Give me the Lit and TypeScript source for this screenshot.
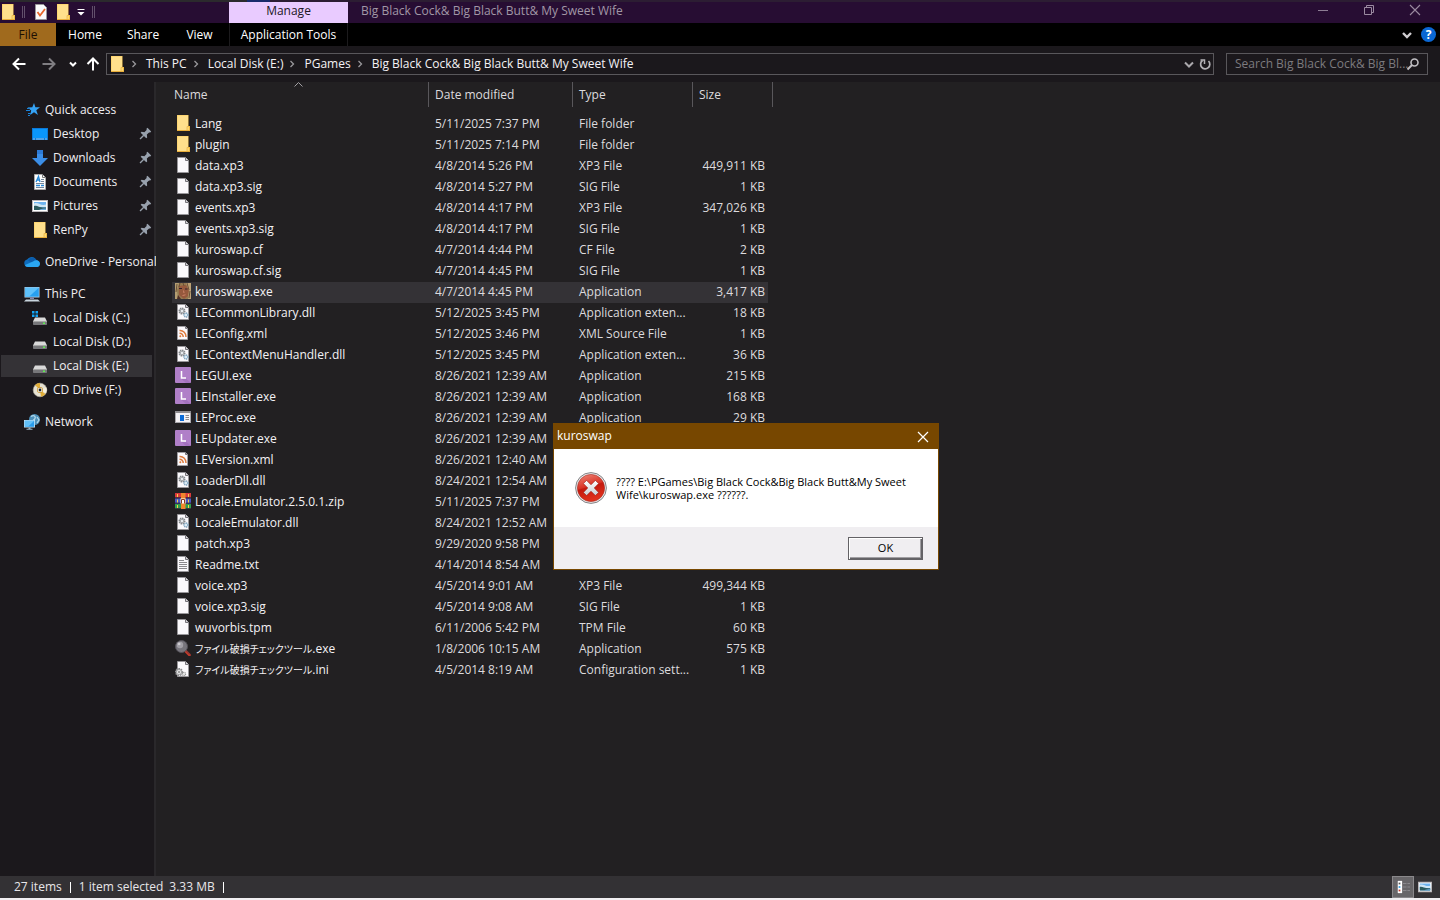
import { LitElement, html, css, svg, TemplateResult } from "lit";
import { customElement } from "lit/decorators.js";
import { classMap } from "lit/directives/class-map.js";

const page = svg`<path d="M2.500 .5h8l3 3v12h-11z" fill="#fbf9fc" stroke="#98969a"/><path d="M10.500 .5v3h3" fill="#d8d6da" stroke="#77757a"/>`;
const drive = svg`<path d="M3 7.500h10l2 4H1z" fill="#d9d9d9"/><rect x="1" y="11" width="14" height="4" rx=".8" fill="#77777a"/><rect x="1" y="11" width="14" height="1" fill="#a5a5a5"/><rect x="11" y="12.500" width="2" height="1.500" fill="#5ff04f"/>`;
const gears = svg`<circle cx="7" cy="7" r="2.600" fill="none" stroke="#85898d" stroke-width="1.800" stroke-dasharray="1.400 .6"/><circle cx="7" cy="7" r="1.800" fill="#e8ebee" stroke="#777b80" stroke-width=".6"/><circle cx="11" cy="11" r="2" fill="#dcebf5" stroke="#7fa3bd" stroke-width="1.400" stroke-dasharray="1.200 .5"/>`;

const icons: Record<string, TemplateResult> = {
  folder: svg`<path d="M2 0h11.500v11H15v5H2z" fill="#fbcb5a"/><path d="M2.500 .5h10.500v14.500H2.500z" fill="#ffe08c"/><path d="M12 11.500h2.500v4H12z" fill="#fdd871" stroke="#e5ab35" stroke-width=".6"/><path d="M2 15.500h13" stroke="#e9ae3a"/>`,
  file: page,
  dll: svg`${page}${gears}`,
  ini: svg`${page}<g transform="translate(-3 1.500)"><circle cx="7" cy="9.500" r="3" fill="#eee" stroke="#8b8b8e" stroke-width="2.200" stroke-dasharray="1.500 .7"/><circle cx="7" cy="9.500" r="2.600" fill="#e6e6e8" stroke="#888" stroke-width=".6"/><circle cx="7" cy="9.500" r="1" fill="#888"/><circle cx="12" cy="11.500" r="1.600" fill="#eee" stroke="#999" stroke-width="1.200" stroke-dasharray="1 .5"/></g>`,
  txt: svg`${page}<path d="M4 4.500h5M4 6.500h8M4 8.500h8M4 10.500h8M4 12.500h8" stroke="#8b898d"/>`,
  xml: svg`<path d="M2.500 1.500h8l2 2v11h-10z" fill="#fbf9fc" stroke="#a09ea2"/><path d="M10.500 1.500v2h2" fill="none" stroke="#77757a"/><g fill="none" stroke="#dd7a3c" stroke-width="1.500"><path d="M4.500 5.500a6 6 0 0 1 6.500 6.500M4.500 8.300a3.500 3.500 0 0 1 3.700 3.700"/></g><circle cx="5.300" cy="11.300" r="1" fill="#dd7a3c"/>`,
  le: svg`<rect width="16" height="16" rx="1" fill="#b07fc8"/><path d="M6 11.500h5L16 16h-5z" fill="#a372bd"/><path d="M6.500 4v7H11" fill="none" stroke="#fff" stroke-width="1.500"/>`,
  proc: svg`<rect x=".5" y="2.500" width="15" height="11" fill="#f4f2f5" stroke="#aaa8ac"/><rect y="2" width="16" height="2" fill="#8e8c90"/><rect x="5" y="6" width="4" height="6" fill="#0a6ad6"/><path d="M10.500 6.500H14M10.500 8.500H14M10.500 10.500H14" stroke="#8b898d"/>`,
  zip: svg`<rect width="16" height="5" fill="#d93a3a"/><rect y="5.500" width="16" height="5" fill="#4a59c4"/><rect y="11" width="16" height="5" fill="#2f9e4d"/><path d="M0 4.500h16M0 10h16M0 15.500h16" stroke="#3a2440" stroke-width=".8"/><rect x="6" width="4.500" height="16" fill="#f0862e"/><rect x="5.500" y="5.500" width="5" height="5" fill="#fff"/><path d="M6.500 10.500v-4h3v4" fill="none" stroke="#8b3d1d"/><path d="M2.500 1v3M13.500 1v3M2.500 6.500v3M13.500 6.500v3M2.500 12v3M13.500 12v3" stroke="#f4d348"/>`,
  lens: svg`<path d="M10 10.500l4.500 4.500" stroke="#c0392b" stroke-width="2.600" stroke-linecap="round"/><path d="M11 10.500l4 4" stroke="#54303a" stroke-width=".8"/><circle cx="6.500" cy="6.500" r="6" fill="#77757c" stroke="#55525a"/><circle cx="5" cy="5" r="3.200" fill="#a19fa6"/><circle cx="4.200" cy="4" r="1.300" fill="#cfcdd2"/>`,
  girl: svg`<rect width="16" height="16" fill="#94794f"/><path d="M4 3l7-1 3 5-1 6-4 3-5-4z" fill="#96593d"/><path d="M0 0h4L2 7l1 9H0z" fill="#b39e72"/><path d="M11 0h5v16h-3l1-8z" fill="#bda275"/><path d="M5 0l-1 4M8 0l1 3M12 0l2 7M2 1L1 9M15 8l-1 7" stroke="#6b4f36"/><path d="M4 5.500h3M10 6h2.500" stroke="#30202a" stroke-width="1.200"/><path d="M8.500 7.500l.5 2.500M7.500 12.500l3-.7" stroke="#cf8468"/><path d="M3 12l3 4H2z" fill="#4d2d25"/>`,
  star: svg`<path d="M10 1l1.400 4.200 4.600.1-3.700 2.900 1.600 4.800L10 10.200 6.200 13l1-4.500L3.500 5.500l4.800-.2z" fill="#35a2f4"/><path d="M2 8.500h4M4 11.500h3M3 6.500h3M4 13.500h2" stroke="#1a82d8"/>`,
  desktop: svg`<rect y="2" width="16" height="12" fill="#0c79d8"/><rect x="1" y="3" width="14" height="9" fill="#0a96fb"/><path d="M1 13h2M4 13h8M13 13h2" stroke="#bfe2ff" stroke-width=".8"/>`,
  down: svg`<path d="M5 0h6v8h5l-8 8-8-8h5z" fill="#3b8ee8"/><path d="M5 0h6v4H5z" fill="#2d7ad6"/>`,
  docs: svg`<path d="M2.500 .5h8l3 3v12h-11z" fill="#fdfdfd" stroke="#aaa"/><path d="M10.500 .5v3h3" fill="none" stroke="#777"/><path d="M4 8L6.500 2.500 8 8M5 6h3" fill="none" stroke="#2689d8" stroke-width="1.300"/><path d="M9 5.500h3M9 7.500h3M4 9.500h8M4 13.500h8" stroke="#74869a"/><path d="M4 11.500h4M9 11.500h3" stroke="#2689d8" stroke-width="1.400"/>`,
  pictures: svg`<rect x=".5" y="2.500" width="15" height="11" fill="#fff" stroke="#bcb8bb"/><rect x="2" y="4" width="12" height="8" fill="#6fb4f0"/><path d="M2 5.500c4-2 7 3 12 1V9H2z" fill="#cfe6f5"/><path d="M2 8c3-1 5 2 12 1.500V12H2z" fill="#2d5c60"/><path d="M7 12c2-1.500 4-1.500 7-1.500V12z" fill="#6eaadb"/>`,
  cloud: svg`<path d="M4 13a3.800 3.800 0 0 1-.8-7.500A5.400 5.400 0 0 1 12.500 6 3.600 3.600 0 0 1 12.500 13z" fill="#0f6cbd"/><path d="M6 4a5.200 5.200 0 0 1 6.500 2.200L8 9 4 6.500z" fill="#0b5cab"/><path d="M1 11l8-3.500c3-2.500 7-1 7 2s-2 3.500-3.500 3.500H4c-2 0-2.700-1-3-2z" fill="#2aa6f2"/>`,
  pc: svg`<rect x=".5" y="1" width="15" height="10.500" fill="#b9d6ea"/><rect x="1.200" y="1.700" width="13.600" height="9" fill="#27a0f0"/><path d="M1.200 1.700h13.600L5 10.700H1.200z" fill="#5fc1fa"/><path d="M6 11.500h4V13H6z" fill="#88a"/><path d="M2 13.500h12l2 2H0z" fill="#c9d5de"/>`,
  driveC: svg`${drive}<path d="M0 1h2.500v2.500H0zM3.500 1H6v2.500H3.500zM0 4.500h2.500V7H0zM3.500 4.500H6V7H3.500z" fill="#13a4f4"/>`,
  drive,
  cd: svg`<circle cx="8" cy="8" r="6.800" fill="#e6e1d2" stroke="#b8b3a6" stroke-width=".6"/><path d="M8 8L3 3a7 7 0 0 1 5-2zM8 8l5.500 4A7 7 0 0 1 9 14.800z" fill="#e1ae39"/><path d="M8 8l6.500-2.500A6.800 6.800 0 0 1 14 11z" fill="#f6f0dc"/><circle cx="8" cy="8" r="3" fill="#c99529"/><circle cx="8" cy="8" r="2.300" fill="#f7f4ee"/><circle cx="8" cy="8" r="1.400" fill="#222"/>`,
  network: svg`<circle cx="10.500" cy="5.500" r="5.500" fill="#4d8fb8"/><path d="M7 2.500c3-2 5 0 4 2s-3 2-4 4M13 3l2 3-2 3" fill="none" stroke="#b3d9ea" stroke-width="1.300"/><rect y="6" width="11" height="7.500" fill="#c5e4f5"/><rect x=".8" y="6.800" width="9.400" height="6" fill="#2a9cec"/><path d="M.8 6.800h9.400L4 12.800H.8z" fill="#62c0f8"/><path d="M4.500 13.500h2v1.200h2v1h-6v-1h2z" fill="#9ab6c8"/>`,
  task: svg`<path d="M2.500 .5h8l3 3v12h-11z" fill="#fbf9fc" stroke="#98969a"/><path d="M4.500 8l2.500 3.500L12 5" fill="none" stroke="#e8672c" stroke-width="1.800"/>`,
  pin: svg`<g transform="rotate(45 8 8)"><path d="M5 1h6v2H10v4l2.500 2v1.500h-9V9L6 7V3H5z" fill="#98a1ad"/><path d="M8 10v6" stroke="#98a1ad" stroke-width="1.500"/></g>`,
  back: svg`<path d="M14.500 8H3M8 2.500L2.500 8 8 13.500" fill="none" stroke="#fff" stroke-width="2"/>`,
  forward: svg`<path d="M1.500 8H13M8 2.500L13.500 8 8 13.500" fill="none" stroke="#807e82" stroke-width="2"/>`,
  up: svg`<path d="M8 14.500V3M2.500 8L8 2.500 13.500 8" fill="none" stroke="#fff" stroke-width="2"/>`,
  chevron: svg`<path d="M5 6.500L8 9.500l3-3" fill="none" stroke="#fff" stroke-width="2"/>`,
  chevronDown: svg`<path d="M4 6.500L8 10.500l4-4" fill="none" stroke="#aaa8ac" stroke-width="2"/>`,
  chevronLight: svg`<path d="M4 6l4 4 4-4" fill="none" stroke="#d0ced2" stroke-width="2.400"/>`,
  crumb: svg`<path d="M6.500 5l3 3-3 3" fill="none" stroke="#9a989c" stroke-width="1.300"/>`,
  refresh: svg`<path d="M11.500 5A4.600 4.600 0 1 1 5.500 4.500" fill="none" stroke="#b3b1b5" stroke-width="1.700"/><path d="M3.500 4H7.500v4" fill="none" stroke="#b3b1b5" stroke-width="1.500"/>`,
  search: svg`<circle cx="9.500" cy="6.500" r="3.500" fill="none" stroke="#c0bec2" stroke-width="1.600"/><path d="M7 9L2.500 13.500" stroke="#c0bec2" stroke-width="2"/>`,
  quick: svg`<path d="M4.500 5.500h7" stroke="#fff"/><path d="M4.500 8h7L8 11.500z" fill="#fff"/>`,
  min: svg`<path d="M3 8.500h10" stroke="#8d7d94"/>`,
  restore: svg`<path d="M3.500 5.500h7v7h-7zM5.500 5.500v-2h7v7h-2" fill="none" stroke="#9a8aa0"/>`,
  close: svg`<path d="M3 3l10 10M13 3L3 13" stroke="#9a8aa0" stroke-width="1.100"/>`,
  closeWhite: svg`<path d="M3 3l10 10M13 3L3 13" stroke="#fff" stroke-width="1.200"/>`,
  details: svg`<path d="M2 1h5v14H2z" fill="#fff"/><path d="M3 3h2v2H3z" fill="#555"/><path d="M3 7h2v2H3z" fill="#2d9be0"/><path d="M3 11h2v2H3z" fill="#c0392b"/><path d="M8 4h4M13 4h3M8 8h4M13 8h3M8 12h4M13 12h3" stroke="#908e92"/>`,
};

const icon = (name: string) =>
  html`<svg class="icon" viewBox="0 0 16 16" aria-hidden="true">${icons[name]}</svg>`;

const title = "Big Black Cock& Big Black Butt& My Sweet Wife";

type Row = [string, string, string, string, string];
const files: Row[] = [
  ["folder", "Lang", "5/11/2025 7:37 PM", "File folder", ""],
  ["folder", "plugin", "5/11/2025 7:14 PM", "File folder", ""],
  ["file", "data.xp3", "4/8/2014 5:26 PM", "XP3 File", "449,911 KB"],
  ["file", "data.xp3.sig", "4/8/2014 5:27 PM", "SIG File", "1 KB"],
  ["file", "events.xp3", "4/8/2014 4:17 PM", "XP3 File", "347,026 KB"],
  ["file", "events.xp3.sig", "4/8/2014 4:17 PM", "SIG File", "1 KB"],
  ["file", "kuroswap.cf", "4/7/2014 4:44 PM", "CF File", "2 KB"],
  ["file", "kuroswap.cf.sig", "4/7/2014 4:45 PM", "SIG File", "1 KB"],
  ["girl", "kuroswap.exe", "4/7/2014 4:45 PM", "Application", "3,417 KB"],
  ["dll", "LECommonLibrary.dll", "5/12/2025 3:45 PM", "Application exten...", "18 KB"],
  ["xml", "LEConfig.xml", "5/12/2025 3:46 PM", "XML Source File", "1 KB"],
  ["dll", "LEContextMenuHandler.dll", "5/12/2025 3:45 PM", "Application exten...", "36 KB"],
  ["le", "LEGUI.exe", "8/26/2021 12:39 AM", "Application", "215 KB"],
  ["le", "LEInstaller.exe", "8/26/2021 12:39 AM", "Application", "168 KB"],
  ["proc", "LEProc.exe", "8/26/2021 12:39 AM", "Application", "29 KB"],
  ["le", "LEUpdater.exe", "8/26/2021 12:39 AM", "", ""],
  ["xml", "LEVersion.xml", "8/26/2021 12:40 AM", "", ""],
  ["dll", "LoaderDll.dll", "8/24/2021 12:54 AM", "", ""],
  ["zip", "Locale.Emulator.2.5.0.1.zip", "5/11/2025 7:37 PM", "", ""],
  ["dll", "LocaleEmulator.dll", "8/24/2021 12:52 AM", "", ""],
  ["file", "patch.xp3", "9/29/2020 9:58 PM", "", ""],
  ["txt", "Readme.txt", "4/14/2014 8:54 AM", "", ""],
  ["file", "voice.xp3", "4/5/2014 9:01 AM", "XP3 File", "499,344 KB"],
  ["file", "voice.xp3.sig", "4/5/2014 9:08 AM", "SIG File", "1 KB"],
  ["file", "wuvorbis.tpm", "6/11/2006 5:42 PM", "TPM File", "60 KB"],
  ["lens", "ファイル破損チェックツール.exe", "1/8/2006 10:15 AM", "Application", "575 KB"],
  ["ini", "ファイル破損チェックツール.ini", "4/5/2014 8:19 AM", "Configuration sett...", "1 KB"],
];

// Japanese names are set in a slightly smaller size than their Latin extension.
const fileName = (name: string) => {
  const dot = name.lastIndexOf(".");
  return name.startsWith("フ")
    ? html`<span><span class="jp">${name.slice(0, dot)}</span>${name.slice(dot)}</span>`
    : html`<span>${name}</span>`;
};

interface Place { icon: string; label: string; child?: boolean; pinned?: boolean; current?: boolean }
const places: Place[][] = [
  [
    { icon: "star", label: "Quick access" },
    { icon: "desktop", label: "Desktop", child: true, pinned: true },
    { icon: "down", label: "Downloads", child: true, pinned: true },
    { icon: "docs", label: "Documents", child: true, pinned: true },
    { icon: "pictures", label: "Pictures", child: true, pinned: true },
    { icon: "folder", label: "RenPy", child: true, pinned: true },
  ],
  [{ icon: "cloud", label: "OneDrive - Personal" }],
  [
    { icon: "pc", label: "This PC" },
    { icon: "driveC", label: "Local Disk (C:)", child: true },
    { icon: "drive", label: "Local Disk (D:)", child: true },
    { icon: "drive", label: "Local Disk (E:)", child: true, current: true },
    { icon: "cd", label: "CD Drive (F:)", child: true },
  ],
  [{ icon: "network", label: "Network" }],
];

const shared = css`
  * { box-sizing: border-box; }
  button { font: inherit; color: inherit; background: none; border: 0; padding: 0; margin: 0; }
  a { color: inherit; text-decoration: none; }
  .icon { display: block; flex: none; width: 16px; height: 16px; }
`;

@customElement("title-bar")
class TitleBar extends LitElement {
  static styles = [shared, css`
    :host { display: block; color: #fff; }
    .strip { display: flex; height: 2px; background: #2c1d33; }
    .strip-dark { width: 247px; background: #2b2a2d; }
    .strip-blue { width: 23px; background: #182a6c; }
    .caption { display: flex; height: 21px; background: #270d33; align-items: center; }
    .quick { display: flex; align-items: center; width: 229px; height: 21px; padding-bottom: 1px; }
    .bar { width: 3px; height: 12px; border: 1px solid #62506b; border-width: 0 1px; margin: 0 8px 0 6px; }
    .bar-last { margin: 0 3px; }
    .gap { margin-left: 6px; }
    .gap-small { margin-left: 2px; }
    .manage { width: 119px; height: 21px; background: #e9cbff; color: #201625; text-align: center; line-height: 17px; }
    .name { flex: 1; padding-left: 13px; color: #a197a6; line-height: 18px; height: 21px; }
    .window { display: flex; height: 21px; align-items: flex-start; padding-right: 2px; }
    .window button { width: 46px; display: flex; justify-content: center; }
    .ribbon { display: flex; height: 23px; background: #000; line-height: 23px; align-items: center; }
    .file { width: 56px; height: 23px; background: #a06a1d; color: #1c0f02; }
    .tab { width: 58px; height: 23px; text-align: center; }
    .tab-view { width: 57px; padding-right: 2px; }
    .tools { width: 119px; height: 23px; border: 1px solid #1c1b1d; border-width: 0 1px; }
    .fill { flex: 1; }
    .help { width: 15px; height: 15px; border-radius: 50%; background: #0a67d4; font-weight: 700; line-height: 15px; text-align: center; margin: 0 4px 0 6px; }
  `];
  render() {
    return html`
      <div class="strip"><div class="strip-dark"></div><div class="strip-blue"></div><div class="fill"></div></div>
      <div class="caption">
        <div class="quick">
          ${icon("folder")}<span class="bar"></span>${icon("task")}<span class="gap"></span>${icon("folder")}
          <button class="gap-small" aria-label="Customize toolbar">${icon("quick")}</button><span class="bar bar-last"></span>
        </div>
        <div class="manage">Manage</div>
        <div class="name">${title}</div>
        <div class="window">
          <button aria-label="Minimize">${icon("min")}</button>
          <button aria-label="Restore">${icon("restore")}</button>
          <button aria-label="Close">${icon("close")}</button>
        </div>
      </div>
      <div class="ribbon">
        <button class="file">File</button>
        <button class="tab">Home</button>
        <button class="tab">Share</button>
        <button class="tab tab-view">View</button>
        <button class="tools">Application Tools</button>
        <span class="fill"></span>
        <button aria-label="Expand ribbon">${icon("chevronLight")}</button>
        <button class="help" aria-label="Help">?</button>
      </div>`;
  }
}

@customElement("address-bar")
class AddressBar extends LitElement {
  static styles = [shared, css`
    :host { display: flex; height: 36px; padding: 0 12px 0 11px; align-items: center; background: #1b181c; color: #f4f2f5; gap: 12px; }
    .nav { display: flex; align-items: center; }
    .nav button { margin-right: 14px; }
    .nav .recent { margin-right: 4px; margin-left: -6px; }
    .nav .up { margin-right: -7px; }
    .path { flex: 1; display: flex; align-items: center; height: 22px; border: 1px solid #59575b; padding: 0 0 0 2px; }
    .crumb { display: flex; align-items: center; }
    .crumb .icon { margin: 0 4px 0 1px; }
    .fill { flex: 1; }
    .search { display: flex; align-items: center; width: 202px; height: 22px; border: 1px solid #59575b; padding: 0 6px 0 8px; }
    .search .icon { margin-left: -4px; }
    .box { flex: 1; min-width: 0; background: none; border: 0; outline: 0; padding: 0; font: inherit; color: inherit; text-overflow: ellipsis; }
    .box::placeholder { color: #7d7b7f; opacity: 1; }
  `];
  render() {
    return html`
      <nav class="nav">
        <button aria-label="Back">${icon("back")}</button>
        <button aria-label="Forward">${icon("forward")}</button>
        <button class="recent" aria-label="Recent locations">${icon("chevron")}</button>
        <button class="up" aria-label="Up">${icon("up")}</button>
      </nav>
      <div class="path">
        ${icon("folder")}
        ${["This PC", "Local Disk (E:)", "PGames", title].map(
          (p) => html`<span class="crumb">${icon("crumb")}<a href="#">${p}</a></span>`)}
        <span class="fill"></span>
        <button aria-label="Previous locations">${icon("chevronDown")}</button>
        <button aria-label="Refresh">${icon("refresh")}</button>
      </div>
      <label class="search">
        <input class="box" type="text" aria-label="Search" placeholder="Search Big Black Cock& Big Bl..." />
        ${icon("search")}
      </label>`;
  }
}

@customElement("places-pane")
class PlacesPane extends LitElement {
  static styles = [shared, css`
    :host { display: flex; flex-direction: column; gap: 8px; width: 156px; flex: none; padding: 16px 2px 0 1px; background: #1b181c; border-right: 2px solid #2a282b; color: #f0eef1; }
    .place { display: flex; align-items: center; gap: 5px; height: 24px; padding-left: 23px; line-height: 22px; white-space: nowrap; }
    .child { padding-left: 31px; }
    .current { background: #343236; border: 1px solid #1b181c; border-width: 1px 0; }
    .label { flex: 1; }
    .pin .icon { width: 14px; height: 14px; }
  `];
  render() {
    return places.map((group) => html`<div>${group.map((p) => html`
      <a href="#" class=${classMap({ place: true, child: !!p.child, current: !!p.current })}>
        ${icon(p.icon)}<span class="label">${p.label}</span>
        ${p.pinned ? html`<span class="pin">${icon("pin")}</span>` : ""}
      </a>`)}</div>`);
  }
}

@customElement("file-table")
class FileTable extends LitElement {
  static styles = [shared, css`
    :host { display: block; flex: 1; min-width: 0; background: #222022; padding-left: 16px; overflow: hidden; color: #dddbde; }
    table { border-collapse: separate; border-spacing: 0; table-layout: fixed; width: 601px; }
    th { height: 25px; padding: 0 0 0 6px; font-weight: 400; text-align: left; border-right: 1px solid #59575b; position: relative; }
    th:first-child { padding-left: 2px; }
    .c-name { width: 257px; }
    .c-date { width: 144px; }
    .c-type { width: 120px; }
    .c-size { width: 80px; }
    .sort { position: absolute; right: 125px; top: 0; width: 9px; height: 5px; }
    tbody::before { content: ""; display: block; height: 7px; }
    td { height: 21px; padding: 0 0 0 6px; line-height: 19px; vertical-align: top; white-space: nowrap; }
    td:first-child { padding-left: 3px; color: #f4f2f5; }
    td:last-child { padding-right: 3px; text-align: right; border-right: 5px solid transparent; background-clip: padding-box; }
    .file { display: flex; align-items: flex-start; gap: 4px; height: 21px; }
    .file .icon { margin-top: 1px; }
    .jp { font-size: 10px; font-feature-settings: "palt"; }
    .selected td { background-color: #343236; }
  `];
  render() {
    return html`<table>
      <colgroup><col class="c-name" /><col class="c-date" /><col class="c-type" /><col class="c-size" /></colgroup>
      <thead><tr>
        <th>Name<svg class="sort" viewBox="0 0 9 5" aria-hidden="true"><path d="M.5 4.500l4-4 4 4" fill="none" stroke="#a19fa3"/></svg></th>
        <th>Date modified</th><th>Type</th><th>Size</th>
      </tr></thead>
      <tbody>${files.map(([ic, name, date, type, size]) => html`
        <tr class=${classMap({ selected: name === "kuroswap.exe" })}>
          <td><span class="file">${icon(ic)}${fileName(name)}</span></td>
          <td>${date}</td><td>${type}</td><td>${size}</td>
        </tr>`)}</tbody>
    </table>`;
  }
}

@customElement("error-dialog")
class ErrorDialog extends LitElement {
  static styles = [shared, css`
    :host { position: absolute; left: 553px; top: 423px; width: 386px; border: 1px solid #774700; background: #fff; color: #000; }
    .head { display: flex; justify-content: space-between; align-items: center; height: 25px; padding: 0 7px 0 3px; background: #774700; color: #fff; line-height: 17px; }
    .name { padding-bottom: 2px; }
    .body { display: flex; align-items: center; gap: 9px; height: 78px; padding: 0 20px 0 21px; font-size: 11px; line-height: 13px; }
    .error { width: 32px; height: 32px; flex: none; }
    .text { margin: 0; white-space: nowrap; }
    .foot { display: flex; justify-content: flex-end; padding: 10px 15px 9px; background: #f0eef1; }
    .ok { width: 75px; height: 23px; font-size: 11px; line-height: 16px; padding-bottom: 2px; background: #f0eef1; border: 1px solid #646266; box-shadow: inset 1px 1px #fff, inset -1px -1px #646266, inset -2px -2px #a09ea2; }
  `];
  render() {
    return html`
      <div class="head"><span class="name">kuroswap</span><button aria-label="Close">${icon("closeWhite")}</button></div>
      <div class="body">
        <svg class="error" viewBox="0 0 32 32" aria-hidden="true">
          <defs><linearGradient id="red" x1="0" y1="0" x2="0.300" y2="1"><stop offset="0" stop-color="#f0897c"/><stop offset=".5" stop-color="#d93325"/><stop offset=".55" stop-color="#c4190e"/><stop offset="1" stop-color="#e0301c"/></linearGradient>
          <linearGradient id="grey" x1="0" y1="0" x2="0" y2="1"><stop offset="0" stop-color="#fff"/><stop offset="1" stop-color="#c9cbd0"/></linearGradient></defs>
          <circle cx="16" cy="16" r="15.400" fill="#e9e9ea" stroke="#858487"/><circle cx="16" cy="16" r="13.600" fill="url(#red)" stroke="#a8291f" stroke-width=".6"/>
          <path d="M8.400 11.600l3.200-3.200L16 12.800l4.400-4.400 3.200 3.200L19.200 16l4.400 4.400-3.200 3.200L16 19.200l-4.400 4.400-3.200-3.200 4.400-4.400z" fill="url(#grey)" stroke="#9c2018" stroke-width=".6"/>
        </svg>
        <p class="text">???? E:\\PGames\\Big Black Cock&amp;Big Black Butt&amp;My Sweet<br />Wife\\kuroswap.exe ??????.</p>
      </div>
      <div class="foot"><button class="ok">OK</button></div>`;
  }
}

@customElement("app-root")
class AppRoot extends LitElement {
  static styles = [shared, css`
    :host { display: flex; flex-direction: column; height: 100vh; position: relative; overflow: hidden; background: #222022; border-bottom: 2px solid #f1eff2;
      font: 12px/20px "Open Sans", "Noto Sans CJK JP", sans-serif; box-sizing: border-box; }
    .main { flex: 1; min-height: 0; display: flex; }
    .status { display: flex; align-items: center; height: 22px; background: #333134; color: #e8e6e9; padding: 0 4px 0 14px; line-height: 24px; }
    .sep { width: 1px; height: 11px; background: #fff; margin: 0 8px; }
    .mb { margin-left: 6px; }
    .fill { flex: 1; }
    .view { display: flex; align-items: center; justify-content: center; width: 22px; height: 22px; }
    .on { background: #686669; border: 1px solid #8a888b; }
    .view .icon { width: 14px; height: 14px; }
  `];
  render() {
    return html`
      <title-bar></title-bar>
      <address-bar></address-bar>
      <div class="main"><places-pane></places-pane><file-table></file-table></div>
      <div class="status">
        <span>27 items</span><span class="sep"></span><span>1 item selected</span><span class="mb">3.33 MB</span><span class="sep"></span>
        <span class="fill"></span>
        <button class="view on" aria-label="Details view">${icon("details")}</button>
        <button class="view" aria-label="Thumbnail view">${icon("pictures")}</button>
      </div>
      <error-dialog role="dialog" aria-label="kuroswap"></error-dialog>`;
  }
}
